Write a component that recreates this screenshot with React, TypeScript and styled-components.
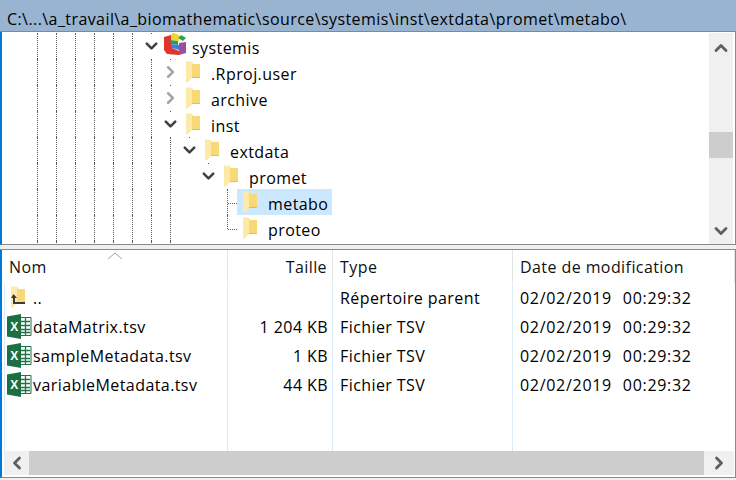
import React from "react";
import styled, { createGlobalStyle } from "styled-components";
import { ChevronDown, ChevronRight, ChevronLeft, ChevronUp } from "lucide-react";

const GlobalStyle = createGlobalStyle`
    html, body {
        margin: 0;
        padding: 0;
        background: #f0f0f0;
    }
    body {
        font-family: "Open Sans", "Noto Sans", sans-serif;
        font-size: 16px;
        letter-spacing: 0.42px;
        color: #000;
    }
`;

const StyledApp = styled.div`
    width: 736px;
    height: 480px;
    display: flex;
    flex-direction: column;
    overflow: hidden;
    padding-bottom: 2px;
    box-sizing: border-box;
`;

const PathBar = styled.div`
    height: 32px;
    flex: none;
    background: #99b4d1;
    border-bottom: 1px solid #7f8a96;
    display: flex;
    align-items: center;
    padding: 7px 0 0 7px;
    box-sizing: border-box;
    white-space: nowrap;
`;

const TreePane = styled.div`
    height: 212px;
    flex: none;
    display: flex;
    background: #fff;
    border-left: 2px solid #0078d7;
    border-right: 1px solid #8a8a8a;
    border-bottom: 1px solid #8a8a8a;
`;

const TreeBody = styled.div`
    flex: 1;
    min-width: 0;
    overflow: hidden;
    padding: 1px 0 0 26px;
`;

const TreeRow = styled.div`
    height: 26px;
    display: flex;
`;

const Cell = styled.div<{ $line?: boolean; $branch?: boolean; $end?: boolean; $stub?: boolean }>`
    width: 19px;
    height: 26px;
    flex: none;
    position: relative;
    display: flex;
    align-items: center;
    justify-content: center;
    color: #404040;
    &::before {
        content: "";
        display: ${(p) => (p.$line || p.$stub ? "block" : "none")};
        position: absolute;
        left: 9px;
        top: 0;
        height: ${(p) => (p.$stub ? "1px" : p.$end ? "14px" : "26px")};
        border-left: 1px dotted #5a5a5a;
    }
    &::after {
        content: "";
        display: ${(p) => (p.$branch ? "block" : "none")};
        position: absolute;
        left: 10px;
        top: 14px;
        width: 9px;
        border-top: 1px dotted #5a5a5a;
    }
`;

const Label = styled.div<{ $selected?: boolean }>`
    height: 26px;
    display: flex;
    align-items: center;
    padding: 0 4px 0 6px;
    background: ${(p) => (p.$selected ? "#cce8ff" : "transparent")};
`;

const Name = styled.span`
    padding-top: 4px;
`;

const IconSlot = styled.span<{ $width: number }>`
    width: ${(p) => p.$width}px;
    flex: none;
    display: flex;
`;

const Splitter = styled.div`
    height: 4px;
    flex: none;
    background: #f0f0f0;
    border-bottom: 1px solid #8a8a8a;
`;

const ScrollV = styled.div`
    width: 24px;
    flex: none;
    margin: 1px 2px 0 0;
    background: #f0f0f0;
    display: flex;
    flex-direction: column;
    align-items: center;
    justify-content: space-between;
    color: #606060;
    position: relative;
    padding: 5px 0 3px;
    box-sizing: border-box;
`;

const ThumbV = styled.div`
    position: absolute;
    left: 0;
    right: 0;
    top: 99px;
    height: 26px;
    background: #cdcdcd;
`;

const ListPane = styled.div`
    flex: 1;
    min-height: 0;
    background: #fff;
    display: flex;
    flex-direction: column;
    position: relative;
    border-left: 2px solid #0078d7;
    border-right: 1px solid #8a8a8a;
    border-bottom: 1px solid #8a8a8a;
`;

const ListGrid = styled.div`
    flex: 1;
    min-height: 0;
    display: grid;
    grid-template-columns: 226px 105px 180px 1fr;
    grid-template-rows: 33px;
    grid-auto-rows: 29px;
    align-content: start;
`;

const HeaderCell = styled.div<{ $right?: boolean }>`
    height: 33px;
    display: flex;
    align-items: center;
    justify-content: ${(p) => (p.$right ? "flex-end" : "flex-start")};
    padding: 1px 5px 1px 7px;
    box-sizing: border-box;
    border-right: 1px solid #e5e5e5;
    white-space: nowrap;
    color: #111;
    &:last-of-type {
        border-right: none;
    }
`;

const SortArrow = styled.svg`
    position: absolute;
    left: 105px;
    top: 2px;
`;

const DataCell = styled.div<{ $right?: boolean; $pad?: number }>`
    display: flex;
    align-items: center;
    justify-content: ${(p) => (p.$right ? "flex-end" : "flex-start")};
    padding: 0 5px 0 ${(p) => p.$pad ?? 7}px;
    white-space: nowrap;
`;

const DateText = styled.span`
    letter-spacing: 0.7px;
    word-spacing: 6px;
`;

const ColumnRules = styled.div`
    position: absolute;
    top: 34px;
    left: 0;
    right: 0;
    bottom: 26px;
    pointer-events: none;
    display: grid;
    grid-template-columns: 226px 105px 180px 1fr;
`;

const ColumnRule = styled.div`
    border-right: 1px solid #d9ebf9;
    &:first-child {
        margin-left: 2px;
        border-left: 1px solid #d9ebf9;
    }
    &:last-child {
        border-right: none;
    }
`;

const ScrollH = styled.div`
    height: 24px;
    flex: none;
    margin: 0 1px 2px 2px;
    display: flex;
    justify-content: space-between;
    background: #cdcdcd;
    color: #606060;
`;

const ScrollEnd = styled.div<{ $width: number }>`
    width: ${(p) => p.$width}px;
    flex: none;
    background: #f0f0f0;
    display: flex;
    align-items: center;
    justify-content: center;
`;

const ProjectSvg = styled.svg`
    margin: -3px 0 0 -3px;
`;

const Folder = () => (
    <svg width="14" height="22" viewBox="0 0 14 22">
        <path d="M1 1h5l1 2h7v14H5z" fill="#f9d877" />
        <path d="M0 .5h5l1 1v15.500l-5 5-1-1z" fill="#fde9a8" />
        <path d="M6 16h8v1H6z" fill="#e8bb56" />
    </svg>
);

const ParentFolder = () => (
    <svg width="15" height="24" viewBox="0 0 15 24">
        <path d="M1 1h5l1 2h7v14H5z" fill="#f9d877" />
        <path d="M0 .5h5l1 1v15.500l-5 5-1-1z" fill="#fde9a8" />
        <path d="M2.500 8l3.500 4H4v4h10v2H2V12H0z" fill="#3a3a3a" />
    </svg>
);

const ExcelIcon = () => (
    <svg width="25" height="25" viewBox="0 0 25 25">
        <path d="M10 3.500h14v18H10z" fill="#fff" stroke="#217346" strokeWidth="1" />
        <path d="M14 7.500h9M14 11.500h9M14 15.500h9M14 18.500h9M18.500 4v17" stroke="#217346" strokeWidth="1.300" fill="none" />
        <path d="M0 2.500L14 0v25L0 22.500z" fill="#1a7043" />
        <text x="3.200" y="17" fill="#fff" fontFamily="Liberation Sans, sans-serif" fontWeight="700" fontSize="12" letterSpacing="0">
            X
        </text>
    </svg>
);

const ProjectIcon = () => (
    <ProjectSvg width="24" height="24" viewBox="0 0 24 24">
        <path d="M0 4l7-2 1 13 7 3v4l-12-1-3-4z" fill="#e2342a" />
        <path d="M7 1l3-1 5 2v6l-8-1z" fill="#f1d632" />
        <path d="M6 7l8 1v4l-7-1z" fill="#2f9e4f" />
        <path d="M7 11l8 1v5l-7-2z" fill="#3f7fe0" />
        <path d="M15 10l7-1v11l-7 2z" fill="#9a4f9f" />
        <path d="M14 5l3-3 5 3-3 3z" fill="#2fa14a" />
    </ProjectSvg>
);

type TreeItem = {
    name: string;
    guides: boolean[];
    arrow?: "open" | "closed";
    icon?: "project";
    selected?: boolean;
    branch?: "mid" | "end";
};

const base = [true, true, true, true, true, true];

const treeItems: TreeItem[] = [
    { name: "systemis", guides: base, arrow: "open", icon: "project" },
    { name: ".Rproj.user", guides: [...base, true], arrow: "closed" },
    { name: "archive", guides: [...base, true], arrow: "closed" },
    { name: "inst", guides: [...base, true], arrow: "open" },
    { name: "extdata", guides: [...base, true, true], arrow: "open" },
    { name: "promet", guides: [...base, true, true, false], arrow: "open" },
    { name: "metabo", guides: [...base, true, true, false, false], selected: true, branch: "mid" },
    { name: "proteo", guides: [...base, true, true, false, false], branch: "end" },
];

const files = [
    { name: "dataMatrix.tsv", size: "1 204 KB" },
    { name: "sampleMetadata.tsv", size: "1 KB" },
    { name: "variableMetadata.tsv", size: "44 KB" },
];

const App = () => {
    return (
        <StyledApp>
            <GlobalStyle />
            <PathBar>C:\...\a_travail\a_biomathematic\source\systemis\inst\extdata\promet\metabo\</PathBar>
            <TreePane>
                <TreeBody>
                    {treeItems.map((item) => (
                        <TreeRow key={item.name}>
                            {item.guides.map((line, i) => (
                                <Cell key={i} $line={line} />
                            ))}
                            {item.arrow && (
                                <Cell $stub>
                                    {item.arrow === "open" ? (
                                        <ChevronDown size={24} strokeWidth={3.2} />
                                    ) : (
                                        <ChevronRight size={24} strokeWidth={3.2} color="#a6a6a6" />
                                    )}
                                </Cell>
                            )}
                            {item.branch && <Cell $line $branch $end={item.branch === "end"} />}
                            <Label $selected={item.selected}>
                                <IconSlot $width={25}>{item.icon === "project" ? <ProjectIcon /> : <Folder />}</IconSlot>
                                <Name>{item.name}</Name>
                            </Label>
                        </TreeRow>
                    ))}
                    <TreeRow>
                        {[...base, true, true].map((line, i) => (
                            <Cell key={i} $line={line} />
                        ))}
                    </TreeRow>
                </TreeBody>
                <ScrollV>
                    <ChevronUp size={20} strokeWidth={3.4} />
                    <ThumbV />
                    <ChevronDown size={20} strokeWidth={3.4} />
                </ScrollV>
            </TreePane>
            <Splitter />
            <ListPane>
                <SortArrow width="16" height="8" viewBox="0 0 16 8">
                    <path d="M1 7l7-6 7 6" fill="none" stroke="#a0a0a0" />
                </SortArrow>
                <ColumnRules>
                    <ColumnRule />
                    <ColumnRule />
                    <ColumnRule />
                    <ColumnRule />
                </ColumnRules>
                <ListGrid>
                    <HeaderCell>Nom</HeaderCell>
                    <HeaderCell $right>Taille</HeaderCell>
                    <HeaderCell>Type</HeaderCell>
                    <HeaderCell>Date de modification</HeaderCell>
                    <DataCell $pad={9}>
                        <IconSlot $width={22}>
                            <ParentFolder />
                        </IconSlot>
                        ..
                    </DataCell>
                    <DataCell />
                    <DataCell>Répertoire parent</DataCell>
                    <DataCell>
                        <DateText>02/02/2019 00:29:32</DateText>
                    </DataCell>
                    {files.map((file) => (
                        <React.Fragment key={file.name}>
                            <DataCell $pad={5}>
                                <IconSlot $width={26}>
                                    <ExcelIcon />
                                </IconSlot>
                                {file.name}
                            </DataCell>
                            <DataCell $right>{file.size}</DataCell>
                            <DataCell>Fichier TSV</DataCell>
                            <DataCell>
                                <DateText>02/02/2019 00:29:32</DateText>
                            </DataCell>
                        </React.Fragment>
                    ))}
                </ListGrid>
                <ScrollH>
                    <ScrollEnd $width={25}>
                        <ChevronLeft size={20} strokeWidth={3.4} />
                    </ScrollEnd>
                    <ScrollEnd $width={30}>
                        <ChevronRight size={20} strokeWidth={3.4} />
                    </ScrollEnd>
                </ScrollH>
            </ListPane>
        </StyledApp>
    );
};

export default App;
